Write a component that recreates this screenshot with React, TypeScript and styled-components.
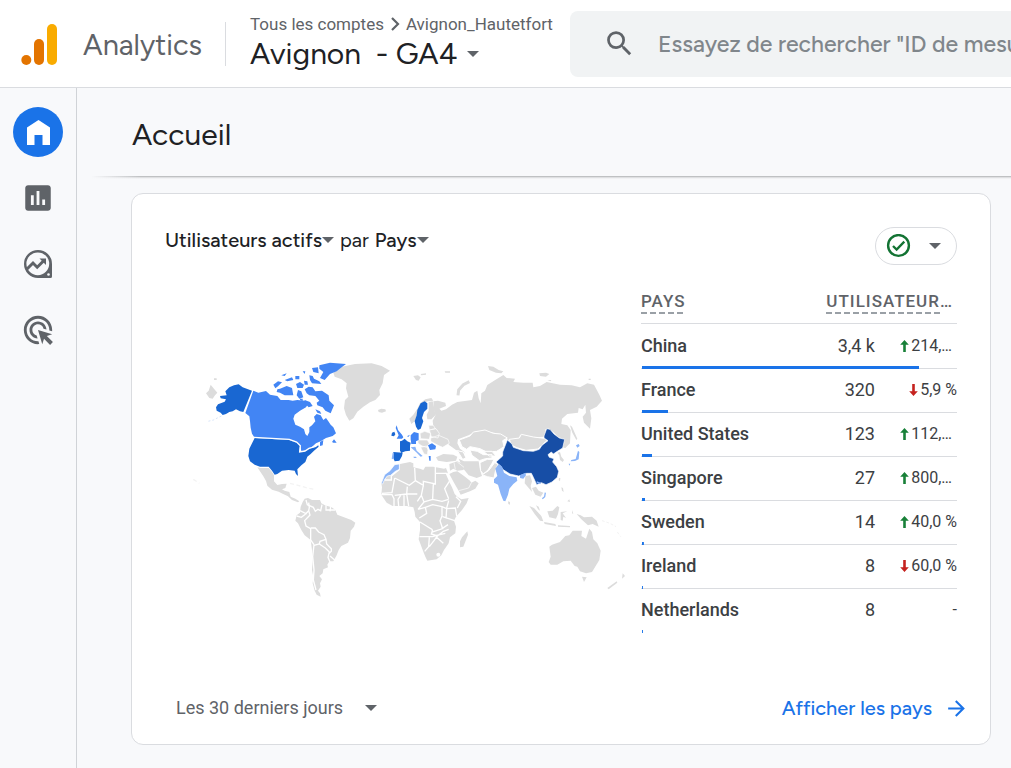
import React from 'react';
import styled, { createGlobalStyle } from 'styled-components';

const display = "Figtree, 'Google Sans', Lato, 'Open Sans', sans-serif";
const ink = '#202124';
const grey = '#5f6368';
const blue = '#1a73e8';
const line = '#dadce0';

const Global = createGlobalStyle`
  * { box-sizing: border-box; }
  body { margin: 0; background: #f8f9fb; color: ${ink}; font-family: Roboto, sans-serif; overflow-x: hidden; }
  button, input { font: inherit; color: inherit; }
  button { background: none; border: 0; padding: 0; cursor: pointer; }
  svg { display: block; flex: none; }
`;

const Page = styled.div`
  min-height: 100vh;
  display: flex;
  flex-direction: column;
`;

const Header = styled.header`
  display: flex;
  align-items: center;
  height: 88px;
  background: #fff;
  border-bottom: 1px solid ${line};
`;

const Brand = styled.a`
  display: flex;
  align-items: center;
  gap: 26px;
  width: 225px;
  flex: none;
  padding: 2px 0 0 21px;
  color: ${grey};
  text-decoration: none;
  font: 400 29px/40px ${display};
`;

const Property = styled.div`
  display: flex;
  flex-direction: column;
  justify-content: center;
  width: 345px;
  height: 44px;
  flex: none;
  padding: 0 0 4px 24px;
  border-left: 1px solid ${line};
`;

const Crumbs = styled.nav`
  display: flex;
  align-items: center;
  gap: 6px;
  color: ${grey};
  font-size: 17px;
  line-height: 24px;
  white-space: nowrap;
  a { color: inherit; text-decoration: none; }
`;

const PropertyButton = styled.button`
  display: flex;
  align-items: center;
  gap: 10px;
  font: 400 30px/36px ${display};
  white-space: pre;
`;

const Search = styled.label`
  display: flex;
  align-items: center;
  gap: 22px;
  flex: 1;
  min-width: 0;
  height: 66px;
  padding-left: 33px;
  border-radius: 8px 0 0 8px;
  background: #f1f3f4;
  color: ${grey};
`;

const SearchInput = styled.input`
  flex: 1;
  min-width: 0;
  padding: 0;
  border: 0;
  outline: 0;
  background: none;
  font: 500 23px/32px ${display};
  &::placeholder { color: #80868b; opacity: 1; }
`;

const Body = styled.div`
  display: flex;
  flex: 1;
`;

const Sidebar = styled.nav`
  display: flex;
  flex-direction: column;
  align-items: center;
  gap: 16px;
  width: 77px;
  flex: none;
  padding-top: 19px;
  border-right: 1px solid #d0d3d7;
`;

const NavButton = styled.button<{ $active?: boolean }>`
  display: flex;
  align-items: center;
  justify-content: center;
  width: 50px;
  height: 50px;
  border-radius: 50%;
  color: ${(p) => (p.$active ? '#fff' : grey)};
  background: ${(p) => (p.$active ? blue : 'transparent')};
`;

const Main = styled.main`
  flex: 1;
  min-width: 0;
`;

const TitleBar = styled.div`
  padding: 27px 55px 21px;
`;

const Title = styled.h1`
  margin: 0;
  font: 400 30px/40px ${display};
`;

const Rule = styled.div`
  height: 3px;
  margin-left: 14px;
  background:
    linear-gradient(90deg, transparent, #bfc1c3 50px) 0 0 / 100% 1px no-repeat,
    linear-gradient(90deg, transparent, #dfe0e2 50px) 0 1px / 100% 1px no-repeat,
    linear-gradient(90deg, transparent, #f1f2f4 50px) 0 2px / 100% 1px no-repeat;
`;

const Card = styled.section`
  display: flex;
  flex-direction: column;
  margin: 14px 20px 23px 54px;
  padding: 33px 33px 16px;
  border: 1px solid ${line};
  border-radius: 12px;
  background: #fff;
`;

const CardHead = styled.div`
  display: flex;
  align-items: flex-start;
  justify-content: space-between;
`;

const CardTitle = styled.h2`
  display: flex;
  align-items: center;
  gap: 6px;
  margin: 0;
  font: 400 20px/26px ${display};
`;

const PickButton = styled.button`
  display: flex;
  align-items: center;
  font-weight: 500;
`;

const StatusButton = styled.button`
  display: flex;
  align-items: center;
  gap: 18px;
  height: 38px;
  width: 82px;
  padding-left: 10px;
  border: 1px solid ${line};
  border-radius: 19px;
  color: ${grey};
`;

const Report = styled.div`
  display: flex;
  align-items: flex-start;
  justify-content: space-between;
`;

const MapArea = styled.figure`
  flex: 1;
  min-width: 0;
  margin: 0;
  padding: 85px 11px 0 25px;
  svg { width: 100%; height: auto; max-width: 640px; margin: 0 auto; }
`;

const Table = styled.table`
  width: 316px;
  flex: none;
  margin-top: 15px;
  border-collapse: separate;
  border-spacing: 0;
  table-layout: fixed;
  color: #3c4043;
`;

const HeadCell = styled.th<{ $right?: boolean }>`
  height: 44px;
  padding: ${(p) => (p.$right ? '0 4px 0 0' : '0')};
  border-bottom: 1px solid ${line};
  color: ${grey};
  font-weight: 500;
  font-size: 17px;
  line-height: 22px;
  letter-spacing: 1px;
  text-align: ${(p) => (p.$right ? 'right' : 'left')};
  white-space: nowrap;
`;

const Dashed = styled.span`
  display: inline-block;
  background: repeating-linear-gradient(90deg, #9aa0a6 0 6px, transparent 6px 9px) 0 100% / 100% 2px no-repeat;
  padding-bottom: 2px;
`;

const Row = styled.tr<{ $last: boolean }>`
  height: 44px;
  background:
    linear-gradient(${blue}, ${blue}) 1px 100% / var(--share) 3px no-repeat,
    linear-gradient(${line}, ${line}) 0 100% / ${(p) => (p.$last ? '0' : '100%')} 1px no-repeat;
  &:first-child { height: 45px; }
`;

const NameCell = styled.th`
  padding: 0 0 2px;
  font-weight: 500;
  font-size: 18px;
  line-height: 24px;
  text-align: left;
  white-space: nowrap;
`;

const ValueCell = styled.td`
  padding: 0 0 2px;
  font-size: 18px;
  line-height: 24px;
  text-align: right;
`;

const ChangeCell = styled.td`
  padding: 0 0 2px;
  font-size: 16px;
  line-height: 24px;
`;

const Change = styled.span<{ $cut?: boolean }>`
  display: flex;
  align-items: center;
  justify-content: flex-end;
  gap: 2px;
  padding-right: ${(p) => (p.$cut ? '5px' : '0')};
  white-space: nowrap;
`;

const CardFoot = styled.div`
  display: flex;
  align-items: center;
  justify-content: space-between;
  margin-top: 55px;
  padding-left: 11px;
`;

const PeriodButton = styled.button`
  display: flex;
  align-items: center;
  gap: 22px;
  color: ${grey};
  font-size: 18px;
  line-height: 40px;
`;

const MoreLink = styled.a`
  display: flex;
  align-items: center;
  gap: 12px;
  margin-right: -12px;
  color: ${blue};
  font: 500 20px/40px ${display};
  text-decoration: none;
`;

const Caret = ({ width = 12 }: { width?: number }) => (
  <svg width={width} height={width / 2} viewBox="0 0 12 6" aria-hidden="true">
    <path d="M0 0h12L6 6z" fill={grey} />
  </svg>
);

const Material = ({ d, size }: { d: string; size: number }) => (
  <svg width={size} height={size} viewBox="0 0 24 24" fill="currentColor" aria-hidden="true">
    <path d={d} />
  </svg>
);

const searchPath =
  'M15.5 14h-.79l-.28-.27A6.47 6.47 0 0 0 16 9.5 6.5 6.5 0 1 0 9.5 16c1.61 0 3.09-.59 4.23-1.57l.27.28v.79l5 4.99L20.49 19l-4.99-5zm-6 0C7.01 14 5 11.99 5 9.5S7.01 5 9.5 5 14 7.01 14 9.5 11.99 14 9.5 14z';
const chartPath =
  'M19 3H5c-1.1 0-2 .9-2 2v14c0 1.1.9 2 2 2h14c1.1 0 2-.9 2-2V5c0-1.1-.9-2-2-2zM9 17H7v-7h2v7zm4 0h-2V7h2v10zm4 0h-2v-4h2v4z';
const targetPath =
  'M11.71 17.99C8.53 17.84 6 15.22 6 12c0-3.31 2.69-6 6-6 3.22 0 5.84 2.53 5.99 5.71l-2.1-.63C15.48 9.31 13.89 8 12 8c-2.21 0-4 1.79-4 4 0 1.89 1.31 3.48 3.08 3.89l.63 2.1zM22 12c0 .3-.01.6-.04.9l-1.97-.59c.01-.1.01-.21.01-.31 0-4.42-3.58-8-8-8s-8 3.58-8 8 3.58 8 8 8c.1 0 .21 0 .31-.01l.59 1.97c-.3.03-.6.04-.9.04-5.52 0-10-4.48-10-10S6.48 2 12 2s10 4.48 10 10zm-3.77 4.26L22 15l-10-3 3 10 1.26-3.77 4.27 4.27 1.98-1.98-4.28-4.26z';
const forwardPath = 'M12 4l-1.41 1.41L16.17 11H4v2h12.17l-5.58 5.59L12 20l8-8z';

const Logo = () => (
  <svg width="36" height="41" viewBox="0 0 36 41" aria-hidden="true">
    <rect x="26" y="0" width="10" height="41" rx="5" fill="#f9ab00" />
    <rect x="13" y="15" width="10" height="26" rx="5" fill="#e37400" />
    <circle cx="5.3" cy="36" r="5" fill="#e37400" />
  </svg>
);

const HomeIcon = () => (
  <svg width="23" height="25" viewBox="0 0 23 25" aria-hidden="true">
    <path d="M0 7.5 11.5 0 23 7.5V25h-7.5V15h-8v10H0z" fill="currentColor" />
  </svg>
);

const ExploreIcon = () => (
  <svg width="28" height="28" viewBox="0 0 28 28" aria-hidden="true">
    <path d="M14 0a14 14 0 0 1 14 14v12.5a1.5 1.5 0 0 1-1.5 1.5H14A14 14 0 0 1 14 0z" fill="currentColor" />
    <circle cx="13.8" cy="13.8" r="11.4" fill="#f8f9fb" />
    <path d="M2.5 19.5 9 13l4.2 4.2 6-6" fill="none" stroke="currentColor" strokeWidth="3" />
    <path d="M15.5 8.5H22V15z" fill="currentColor" />
    <circle cx="24.5" cy="24.5" r="1.3" fill="#f8f9fb" />
  </svg>
);

const CheckIcon = () => (
  <svg width="25" height="24" viewBox="0 0 25 24" fill="none" stroke="#137333" aria-hidden="true">
    <circle cx="12.5" cy="11.5" r="10.4" strokeWidth="2.4" />
    <path d="m7 12 3.6 3.6 7.7-8" strokeWidth="2.3" />
  </svg>
);

const ChangeArrow = ({ up }: { up: boolean }) => (
  <svg width="9" height="12" viewBox="0 0 9 12" aria-hidden="true">
    <path
      d={up ? 'M4.5 0 8.8 4.7H5.8V12H3.2V4.7H.2z' : 'M4.5 12 8.8 7.3H5.8V0H3.2v7.3H.2z'}
      fill={up ? '#188038' : '#c5221f'}
    />
  </svg>
);

const WorldMap = () => (
  <svg viewBox="0 0 1320 750" role="img" aria-label="Utilisateurs actifs par pays" fill="#dcdcdc">
    {/* Greenland and North America */}
    <g>
      <path d="M430 68 455 50 495 42 545 40 575 48 600 62 582 75 578 100 568 120 570 135 556 150 540 157 520 170 502 185 490 205 478 212 468 195 462 175 465 150 475 140 468 115 470 100 455 88 434 80z" />
      <path d="m62 104 8 10 12 14-7 8-7 10-10-2-10-14 8-8zM72 85h8v5h-8z" />
      <path d="m202 352 10 2h24l10 12 6 10v18l10 11 14-3 14-1-4 13-10 4 8 4 14 4 4 14 14 6 12 8-4 3-18-7-12-11-16-8-12-6-20-6-14-12-4-14-8-14-8-12z" />
      <path fill="#1967d2" d="m186 122-26 64-10-2-12-6-10 6-10 2-10 6-10 3-6-7-12-6-2-10 6-9 20-8 4-7-16-3-2-7 20-2-4-12 12-12 14-6 14-3 12 9 16 6z" />
      <path fill="none" stroke="#c3d7f4" strokeWidth="2" strokeDasharray="6 6" d="m94 198-24 12-16 4" />
      <path
        fill="#4285f4"
        d="m190 122 15 6 23-5 12 11 22 4 10 12h24l12 2 14-2 24 2 8 10-6 10-18 10-16 12-4 12 6 18 14 6 12 8 4 14 6 6 6-12v-14l8-6 10-12-4-14 8-8 12 4 8 14 8-6 6 8 8 12 8 8 8 18-10 8-20 6-16 10-14 6-16 14-16 8-12 2-2-12-12-12-20-10-106-7-8-12-4-18-2-20-2-14-12-10z"
      />
      <path
        fill="#4285f4"
        d="m388 46 32-8 48 4-16 12-12 10-20 8-16 18-14-6 10-18-12-10zM366 54l18-2 2 18-16-4zM358 76l10 2 4 8 16 8 6 8-28-2-6-10zM270 116l20-8 16 6 4 22-26 0-14-8-10-2 2-8zM250 104l14-10 12 3-12 12-8 6zM274 76l16-6-6 8zM284 90l22-8 4 8-18 4zM316 78l12 0 0 10-12 0zM338 64l8 0-2 8zM318 102l12-6 12 8-4 10-16 0zM342 92l10 2 2 10-10 0zM324 120l10 4 6 18-12 4-8-10zM344 118l12-8 12 2 8 12 20-2 20 14 2 16 14 14-6 14-4 10-16-8-8-10-16-6-2-8 8-6-12-14-18-2-8-6zM344 150l16 6 8 12-12 4-12-12zM376 178l14 6 4 8-12-4zM330 146l8 0 0 8-8-4zM390 276l10-6-2 16-8 2zM426 276l6-8 8 10-10 0z"
      />
      <path fill="#1967d2" d="m194 264 104 6 22 8 10 10-2 18 16-2 12-8 20-6 8-6 2 6-14 12-10 10-10 8-6 16-12 10-12 12 2 20-6-6-4-10-18-2-20 2-14 10-8 2-8-12-10-12h-26l-16-6-14-10-5-16 3-22 10-20z" />
      <path fill="none" stroke="#fff" strokeWidth="4" d="m192 262 106 6 22 8 11 11-2 19 16-3 12-8 20-6 8-6" />
      <path fill="none" stroke="#f3f3f3" strokeWidth="4" strokeDasharray="12 8" d="m300 400 24 6 28 8 20 4M10 388l18 12" />
    </g>

    {/* South America */}
    <g transform="translate(240 360)">
      <path d="m104 86 10-2 12 6h24l4 10 11 6 20 6 11 8 6 14 26 10 16 6 12 8-4 12-10 12-2 22-6 14-20 10-8 12-6 16-10 18h-12l-6 10 2 8-14 6-2 12-10 8 8 10-6 12 2 10-8 12 6 8 2 10-12-6-6-12-6-22 2-20-4-20 2-30-2-30-4-30-18-14-10-16-10-20-8-8 4-16 10-8 2-18 6-14z" />
      <g fill="none" stroke="#fff" strokeWidth="4">
        <path d="m132 224-4 36 4 40-2 30 8 30M116 98l2 14-2 10 4 13-16 17 4 16 14 8v34l10 14" />
        <path d="m122 174 14 0 10 12 16 8 6 14-18 6-2 8-16 4M168 208l2 14 14 14v8l-6 6M148 222l18 12 12 12-4 16 6 14M180 258l14 12M108 90l4 14 18 8 6 12 8-6 8 4 4-18M168 106l0 14M182 110l-2 14M80 138l14 4 10-8 12-12M90 122l20 10M166 120l30 0" />
      </g>
    </g>

    {/* Europe and Russia */}
    <g transform="translate(540 0)">
      <path d="m24 180 10-4 12 2 2 6-12 4-10-2zM130 78l14-2 8 6-6 10-8-2zM152 72l16-2 0 4-14 2zM224 64h16v4h-14z" />
      <path fill="none" stroke="#dcdcdc" strokeWidth="9" d="m264 136 2-16 14-16 18-9" />
      <path d="m354 48 16 2 16 10 14 4-6 6-16-2-20-8zM508 70l20-2 10 4-10 8-18-2zM532 90l12 0-2 4zM656 86h6v4h-6z" />
      <path d="m118 206 12-12 12-18 8-16 16-12 18-4 6 8-16 2-14 4-12 14-6 18-6 22-12 10z" />
      <path d="m176 156 12-2 6 26 2 16-12 12h-12l-2-14 6-12z" />
      <path d="m190 154 14-2 22 6 2 10-20 8 6 6 14-4 18-14 16-8 28-4 16-2 6-22 10-6 4 23 6 15 2-30 11-8 7-17 20-13 28-17 10 9 25 2-5 10 30 2h28l2 14 20-4 20-12 40 8 35 2 25 6 22-12 20 4 16 30 8 18-16 18-20 10 4 25-4 31-18-18-4-18 10-12-2-24-8 14-12-4-2 14-32 4-16 14-2 16 18 4 10 14-2 40-14 14-10-2 8-24-18-6-16-16-14-10-10 2v22l-36 2-40-8-2 10-34 6-22-18-52-10-22 2-22 12-32 12-2 12 8 16 16 12-28-8-22-16-4-16-28-10-2-18-12-10-2-18 8-16-4-16z" />
      <path stroke="#fff" strokeWidth="3" d="m268 270 32-12 10-12 35-6 25 10 22 2 20 12-14 8 4 18-22 14-30 2-20-10-30-6-10 8-14-8z" />
      <g stroke="#fff" strokeWidth="2">
        <path d="m150 250 14-6 18 6-4 18-26-2zM178 240l20-4 10 14-4 14-20-4zM182 264l24-8 28 12 4 12-20 12-14-6-22-12zM176 226l14 0 6 10-18 4zM144 270l28 0 6 10-8 12-14-4-12-8zM152 292l18-4 4 12-2 14-10-2z" />
      </g>
      <path fill="#1967d2" d="m152 160 12-6 8 6v16l-10 10-6 18 4 10-8 22-8 4-6-10-4-16 6-18 2-16z" />
      <path fill="#1967d2" d="m66 248 7-3 3 8-4 6-8-2zM90 274l6-2 8-6 8 8 10 4-2 10 0 14-14 2-12 4-4-6zM70 306l28 2-2 10-8 14-14 2-4-10z" />
      <path fill="#4285f4" d="m80 226 4 14 12 14 4 8-4 4-16 0 6-10-4-10-5-12zM122 256l10-10 14 4 0 20-8 4 0 8-14 0-2-14zM112 258l8-4-6 8zM174 286l12-6 12 8-2 10-16 2zM176 318l6 0 0 14-4 0z" />
      <path fill="#8ab4f8" d="m122 292 14-2 4 12 18 16-6 2-14-14zM68 308l-3 18 5 2 2-18zM130 320l8 0 2 4-8 0z" />
    </g>

    {/* Africa and the Middle East */}
    <g transform="translate(540 300)">
      <path d="m90 42 30-6 10 4v12l20 4 10 4 6-10h24l32 6 6-2 6 16-8-2 12 28 8 16 8 20 8 8 12 8 22-4-6 16-14 20-18 20-6 12 6 18-2 20-16 12-4 18-14 20-8 16-14 12-28 4-6-12-8-20-12-32 4-28v-24l-14-16-2-14-4-14-20-4H84l-16 0-18-10-16-24 2-22-2-12 10-10 8-12 14-2 22-16z" />
      <path stroke="#fff" strokeWidth="4" fill="none" d="M88 42v16L64 78v12H44M74 84 66 128 36 130M74 84l44 22 18-14-2-38M136 92l24 14 0-12 36 8V50M196 70h36M160 106l-6 30-8 12-4 6M190 102l-2 44M112 110l-2 22 32 0M110 132l-36 4M34 134l32 0 6 12 0 22M92 136l-8 12 2 20M102 136v32M110 132l6 36M154 136l8 20 26-8 28 6 20-6M162 156l-18 22M144 178l22-6 4 18-22 14M166 172l22-8 28 6 14 6-2 30M216 170l0 28-6 14 8 24-30 10-2-8-36-22M230 176l26-2 4 24M218 200l36 12M236 152l-6 22M258 140l14 14-10 20M148 260h40l12-4 26-6M188 240l-4 12 18 6 18-14 16-6M178 262l-2 28-12 14M202 258l-10 14-14 18M200 262l20 18M216 236l18-12M238 94l-14 22 12 30" />
      <circle cx="205" cy="314" r="6" fill="#fff" />
      <path fill="#8ab4f8" stroke="#fff" strokeWidth="2" d="m60 62 14-18 14-2v16l-12 6-14 12-10 2-8 10-6 14-4-2 10-26z" />
      <path d="m292 244 2 10-14 36-10 2 0-18 6-12zM238 72l12-6 12-2 20 14 18 14 4 6 12-6 10 8-10 16-16 8-28 10-4-8-16-28z" />
      <path stroke="#fff" strokeWidth="2" fill="none" d="m266 122 30-8 8-16" />
      <path d="m238 42 24-8 16 8 6 10-4 8-18 2-12-6-10 6zM198 22l22-10 30 2 12 6-4 12-28 4-26-4zM266 26l16 8h18l26 0 4 26 6 18-16 6-24-8-16-20z" />
      <path stroke="#fff" strokeWidth="3" d="m330 38 22-10h20l-6 12-12 20-14 12-8-10zM336 74l20-12 18-24 10 4-8 22-4 20-20-4zM300 0l22 4 18 10h26v10l-20 2-18 6-22-16zM262 2l18 4 8 18-10 4zM340 4l26 0 12 14-20 0z" />
      <path stroke="#fff" strokeWidth="2" fill="none" d="m252 38 4 20M262 36l20 16" />
    </g>

    {/* East Asia */}
    <g transform="translate(870 0)">
      <path stroke="#fff" strokeWidth="3" d="m88 268 30-4 6-11 36 8 32 4 10 6-14 12-14 14-36 4-28-8-16-8z" />
      <path stroke="#fff" strokeWidth="2" fill="#174ea6" d="m82 270 14 12 4 10 30 10 30 2 18-6 8-12 18-14-12-8v-6l8-22 10 2 12 14 16 12 16 4-6 26-16 10-12 8-6-6-10 8 4 8 14 4-4 10 12 14 6 14-4 18-16 14-18 8-14-6-14 6-10-22-6-12-14 0-24 8-26-6-22-14-4-8-16-14 20-18v-12z" />
      <path d="m232 308 8-2 4 14 8 10-4 6-8-6-2-14zM270 226l6 4 16 36-3 4-12-22z" />
      <path fill="#8ab4f8" d="m288 286 8-4 3 6-7 5zM294 302l4 4-2 22-11 5-13 1 2-4 13-3zM266 341l5 0-3 6z" />
    </g>

    {/* India, South-East Asia and Oceania */}
    <g transform="translate(870 330)">
      <path fill="#8ab4f8" d="m56 12 10 8 6 18 16 10 22 4 2 10-12 10-12 14-4 18-8 20-6-2-8-20-8-28-12-6v-10l10-10-6-22zM120 46l16-8 2 8-8 10-10-2z" />
      <path d="m84 124 6 2v8l-5-2zM136 48l14-2 6 18-4 14 4 18-8-10-14-16zM156 84l12-4 8 12 14 6-8 12-16-6zM168 136l8 4 4 12-6-4zM148 138l14 6 22 24 6 16-10-2-16-20zM192 186l34 6 2 6-34-6zM234 196l36 2 0 4-36-2zM202 154l16-2 14-14 6 4-4 20-6 14-20-4zM290 162l12 4 10 6 24-2 14 12 6 18-18-8-14 4-20-18zM242 156l20-2-14 6 10 14-8-4-2 12-6-2zM276 150l4 12-4-2zM244 82l5 2 2 12-5-4zM262 124l6-6 2 8zM237 54l4 0-1 10-4-4z" />
      <path fill="none" stroke="#8ab4f8" strokeWidth="4" d="m170 66 12 4M196 98l-2 12-7 6" />
      <path d="m208 260 8-6 24-8 16-18 12-2 10-14h28l-2 16 14 8 10-30 8 10 4 22 12 12 10 22-4 28-16 26-6 10-18 4-18-6-8-14-8-2-12-16-22 2-18 10h-20l-6-8 6-16zM306 350l14 2-8 14zM428 340l7 8-9 8zM382 384l28-20 2 4-26 20z" />
      <path fill="none" stroke="#f3f3f3" strokeWidth="3" strokeDasharray="8 6" d="m366 182 24 8 18 10M412 216l10 14" />
    </g>
  </svg>
);

type Entry = { name: string; value: string; change: string; up?: boolean; cut?: boolean; share: number };

const entries: Entry[] = [
  { name: 'China', value: '3,4 k', change: '214,…', up: true, cut: true, share: 87.7 },
  { name: 'France', value: '320', change: '5,9 %', up: false, share: 8.3 },
  { name: 'United States', value: '123', change: '112,…', up: true, cut: true, share: 3.2 },
  { name: 'Singapore', value: '27', change: '800,…', up: true, cut: true, share: 1 },
  { name: 'Sweden', value: '14', change: '40,0 %', up: true, share: 0.6 },
  { name: 'Ireland', value: '8', change: '60,0 %', up: false, share: 0.3 },
  { name: 'Netherlands', value: '8', change: '-', share: 0.3 },
];

export default function App() {
  return (
    <Page>
      <Global />
      <Header>
        <Brand href="#">
          <Logo />
          Analytics
        </Brand>
        <Property>
          <Crumbs aria-label="Compte">
            <a href="#comptes">Tous les comptes</a>
            <svg width="10" height="14" viewBox="0 0 10 14" aria-hidden="true">
              <path d="m2 1 6 6-6 6" fill="none" stroke={grey} strokeWidth="2.2" />
            </svg>
            <a href="#compte">Avignon_Hautetfort</a>
          </Crumbs>
          <PropertyButton>
            {'Avignon  - GA4'}
            <Caret />
          </PropertyButton>
        </Property>
        <Search>
          <Material d={searchPath} size={33} />
          <SearchInput aria-label="Rechercher" placeholder={'Essayez de rechercher "ID de mesure"'} />
        </Search>
      </Header>
      <Body>
        <Sidebar aria-label="Navigation">
          <NavButton $active aria-label="Accueil"><HomeIcon /></NavButton>
          <NavButton aria-label="Rapports"><Material d={chartPath} size={34} /></NavButton>
          <NavButton aria-label="Explorer"><ExploreIcon /></NavButton>
          <NavButton aria-label="Publicité"><Material d={targetPath} size={34} /></NavButton>
        </Sidebar>
        <Main>
          <TitleBar>
            <Title>Accueil</Title>
          </TitleBar>
          <Rule />
          <Card>
            <CardHead>
              <CardTitle>
                <PickButton>Utilisateurs actifs<Caret /></PickButton>
                par
                <PickButton>Pays<Caret /></PickButton>
              </CardTitle>
              <StatusButton aria-label="Qualité des données">
                <CheckIcon />
                <Caret />
              </StatusButton>
            </CardHead>
            <Report>
              <MapArea><WorldMap /></MapArea>
              <Table>
                <colgroup>
                  <col />
                  <col width="80" />
                  <col width="82" />
                </colgroup>
                <thead>
                  <tr>
                    <HeadCell scope="col"><Dashed>PAYS</Dashed></HeadCell>
                    <HeadCell scope="col" colSpan={2} $right><Dashed>UTILISATEUR</Dashed>…</HeadCell>
                  </tr>
                </thead>
                <tbody>
                  {entries.map((e, i) => (
                    <Row
                      key={e.name}
                      $last={i === entries.length - 1}
                      style={{ '--share': `${e.share}%` } as React.CSSProperties}
                    >
                      <NameCell scope="row">{e.name}</NameCell>
                      <ValueCell>{e.value}</ValueCell>
                      <ChangeCell>
                        <Change $cut={e.cut}>
                          {e.up !== undefined && <ChangeArrow up={e.up} />}
                          {e.change}
                        </Change>
                      </ChangeCell>
                    </Row>
                  ))}
                </tbody>
              </Table>
            </Report>
            <CardFoot>
              <PeriodButton>
                Les 30 derniers jours
                <Caret />
              </PeriodButton>
              <MoreLink href="#pays">
                Afficher les pays
                <Material d={forwardPath} size={25} />
              </MoreLink>
            </CardFoot>
          </Card>
        </Main>
      </Body>
    </Page>
  );
}
